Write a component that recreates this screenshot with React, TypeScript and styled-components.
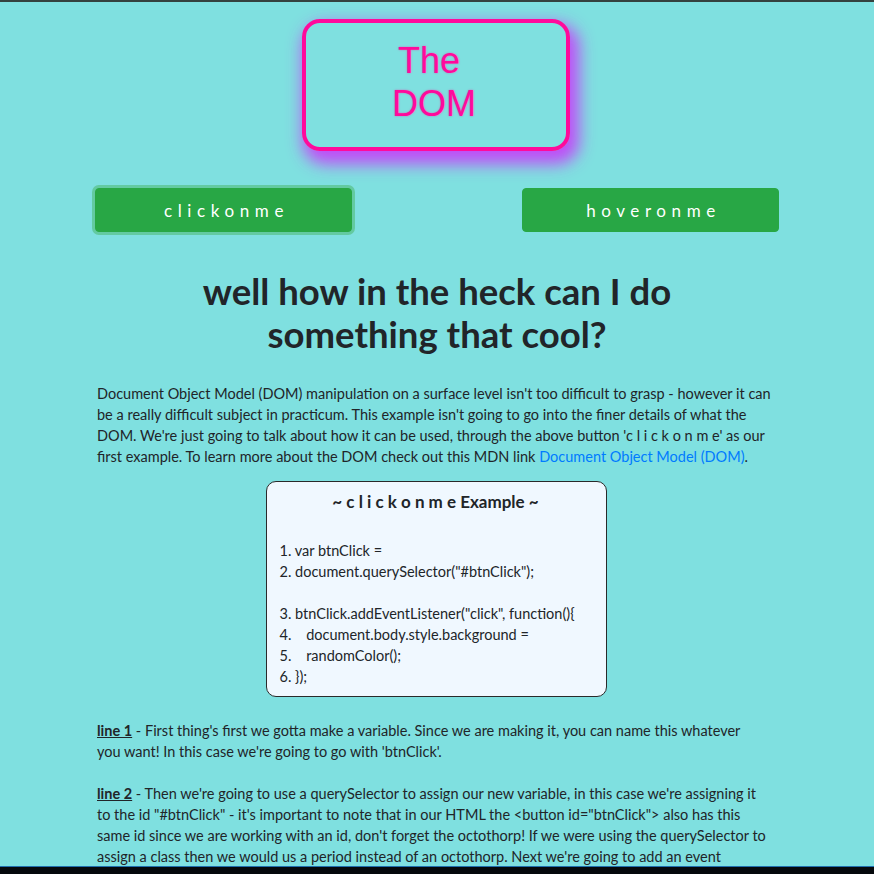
import React from "react";
import styled, { createGlobalStyle } from "styled-components";

const Global = createGlobalStyle`
  html, body { margin: 0; padding: 0; }
  body {
    background: #7fe0e0;
    font-family: Lato, "Liberation Sans", sans-serif;
    color: #212529;
    border-top: 2px solid #34423f;
    min-height: 874px;
  }
`;

const Page = styled.div`
  display: flex;
  flex-direction: column;
  align-items: center;
  padding-top: 17px;
`;

const TitleBox = styled.div`
  box-sizing: border-box;
  width: 268px;
  height: 132px;
  margin-right: 2px;
  border: 4px solid #ff0a9c;
  border-radius: 18px;
  box-shadow: 5px 9px 16px 4px rgba(200, 60, 250, 0.9);
  display: flex;
  justify-content: center;
  padding-top: 16px;
`;

const TitleText = styled.h1`
  margin: 0 4px 0 0;
  width: 110px;
  text-align: center;
  font-family: "Liberation Sans", Arial, sans-serif;
  font-weight: 400;
  font-size: 36px;
  line-height: 43px;
  color: #ff0a9c;
  text-shadow: 0 0 2px rgba(255, 20, 160, 0.6);
`;

const ButtonRow = styled.div`
  width: 684px;
  display: flex;
  justify-content: space-between;
  margin-top: 37px;
`;

const GreenButton = styled.button<{ $focused?: boolean }>`
  box-sizing: border-box;
  width: 257px;
  height: 44px;
  border: 1px solid #28a745;
  border-radius: 4px;
  background: #28a745;
  color: #ffffff;
  font-family: Lato, "Liberation Sans", sans-serif;
  font-size: 17px;
  letter-spacing: 5.6px;
  padding: 0 0 0 6px;
  box-shadow: ${(p) => (p.$focused ? "0 0 0 3px rgba(72, 180, 97, 0.5)" : "none")};
`;

const Heading = styled.h2`
  margin: 38px 0 0;
  width: 520px;
  text-align: center;
  font-size: 36.5px;
  line-height: 43px;
  font-weight: 700;
  color: #212529;
`;

const Content = styled.div`
  width: 680px;
  margin-top: 27px;
  display: flex;
  flex-direction: column;
  align-items: center;
`;

const Para = styled.p<{ $gap?: number }>`
  align-self: stretch;
  margin: 0 0 ${(p) => p.$gap ?? 21}px;
  font-size: 14.5px;
  line-height: 21px;
`;

const Link = styled.a`
  color: #007bff;
  text-decoration: none;
`;

const CodeCard = styled.div`
  box-sizing: border-box;
  width: 341px;
  background: #f0f8ff;
  border: 1px solid #2a2a2a;
  border-radius: 10px;
  padding: 7px 14px 9px 13px;
  margin: 0 2px 23px 0;
`;

const CodeTitle = styled.h5`
  margin: 0 0 25px;
  text-align: center;
  font-size: 17px;
  line-height: 26px;
  font-weight: 700;
`;

const CodeLine = styled.div`
  font-size: 14.5px;
  line-height: 21px;
  white-space: pre;
  min-height: 21px;
`;

const Term = styled.span`
  font-weight: 700;
  text-decoration: underline;
`;

const TaskBar = styled.div`
  position: fixed;
  left: 0;
  right: 0;
  bottom: 0;
  height: 7px;
  background: #05080c;
  border-top: 1px solid #1f6fae;
`;

const codeLines = [
  "1. var btnClick =",
  "2. document.querySelector(\"#btnClick\");",
  "",
  "3. btnClick.addEventListener(\"click\", function(){",
  "4.    document.body.style.background =",
  "5.    randomColor();",
  "6. });",
];

export default function App() {
  return (
    <>
      <Global />
      <Page>
        <TitleBox>
          <TitleText>{"The\u00a0 DOM"}</TitleText>
        </TitleBox>
        <ButtonRow>
          <GreenButton $focused>clickonme</GreenButton>
          <GreenButton>hoveronme</GreenButton>
        </ButtonRow>
        <Heading>well how in the heck can I do something that cool?</Heading>
        <Content>
          <Para $gap={14}>
            Document Object Model (DOM) manipulation on a surface level isn't too difficult to grasp - however it can
            be a really difficult subject in practicum. This example isn't going to go into the finer details of what the
            DOM. We're just going to talk about how it can be used, through the above button 'c l i c k o n m e' as our
            first example. To learn more about the DOM check out this MDN link{" "}
            <Link href="#">Document Object Model (DOM)</Link>.
          </Para>
          <CodeCard>
            <CodeTitle>~ c l i c k o n m e Example ~</CodeTitle>
            {codeLines.map((l, i) => (
              <CodeLine key={i}>{l}</CodeLine>
            ))}
          </CodeCard>
          <Para>
            <Term>line 1</Term> - First thing's first we gotta make a variable. Since we are making it, you can name this whatever
            <br />
            you want! In this case we're going to go with 'btnClick'.
          </Para>
          <Para>
            <Term>line 2</Term> - Then we're going to use a querySelector to assign our new variable, in this case we're assigning it
            <br />
            to the id "#btnClick" - it's important to note that in our HTML the &lt;button id="btnClick"&gt; also has this
            <br />
            same id since we are working with an id, don't forget the octothorp! If we were using the querySelector to
            <br />
            assign a class then we would us a period instead of an octothorp. Next we're going to add an event
            <br />
            listener to our button.
          </Para>
        </Content>
      </Page>
      <TaskBar />
    </>
  );
}
